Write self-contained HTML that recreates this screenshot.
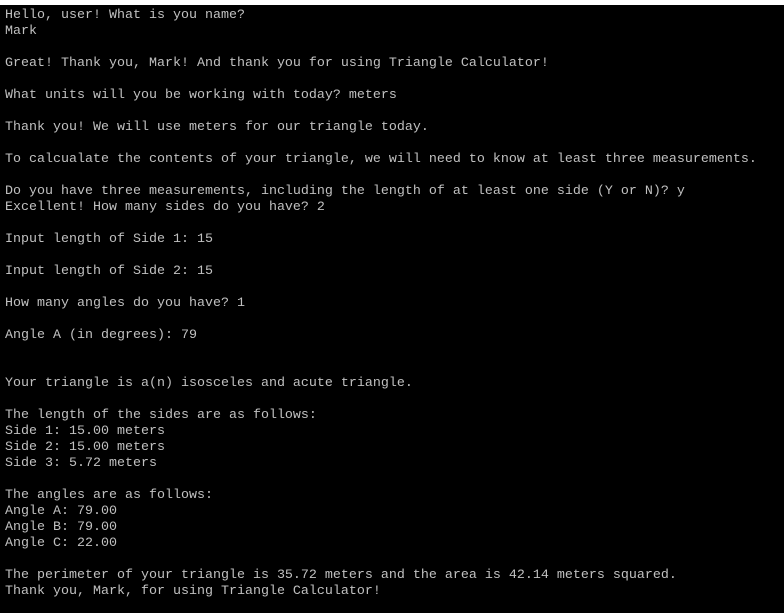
<!DOCTYPE html>
<html><head><meta charset="utf-8"><style>
html,body{margin:0;padding:0;background:#000;width:784px;height:613px;overflow:hidden}
.top{position:absolute;left:0;top:0;width:784px;height:5px;background:#fff}
pre{position:absolute;left:5px;top:8px;margin:0;font-family:"Liberation Mono",monospace;font-size:13.33px;line-height:16px;color:#c0c0c0;white-space:pre}
</style></head><body><div class="top"></div><pre>Hello, user! What is you name?
Mark

Great! Thank you, Mark! And thank you for using Triangle Calculator!

What units will you be working with today? meters

Thank you! We will use meters for our triangle today.

To calcualate the contents of your triangle, we will need to know at least three measurements.

Do you have three measurements, including the length of at least one side (Y or N)? y
Excellent! How many sides do you have? 2

Input length of Side 1: 15

Input length of Side 2: 15

How many angles do you have? 1

Angle A (in degrees): 79


Your triangle is a(n) isosceles and acute triangle.

The length of the sides are as follows:
Side 1: 15.00 meters
Side 2: 15.00 meters
Side 3: 5.72 meters

The angles are as follows:
Angle A: 79.00
Angle B: 79.00
Angle C: 22.00

The perimeter of your triangle is 35.72 meters and the area is 42.14 meters squared.
Thank you, Mark, for using Triangle Calculator!</pre></body></html>
